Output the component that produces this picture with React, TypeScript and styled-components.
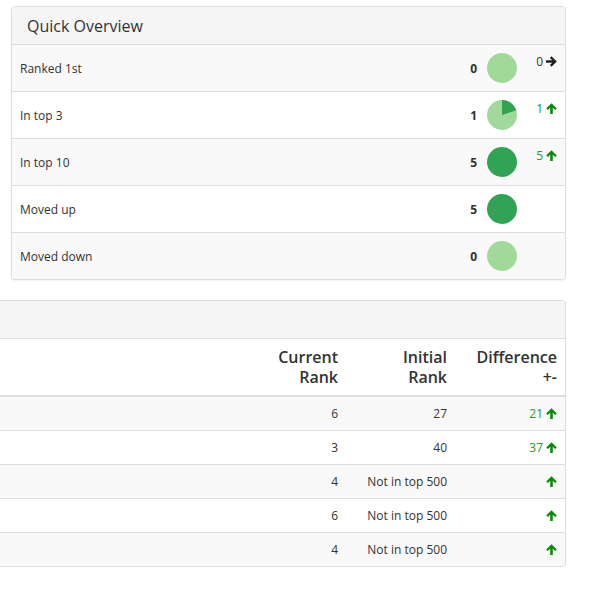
import React from "react";
import styled, { createGlobalStyle } from "styled-components";

const GlobalStyle = createGlobalStyle`
  html, body {
    margin: 0;
    padding: 0;
    background: #fff;
    overflow-x: hidden;
  }
  body {
    font-family: "Open Sans", "DejaVu Sans", sans-serif;
    font-size: 12px;
    line-height: 17px;
    color: #333;
  }
`;

const LIGHT = "#a1d99b";
const DARK = "#31a354";
const GAIN = "#2a9a2a";
const ARROW_GREEN = "#0a8a0a";

const Page = styled.div`
  width: 566px;
  padding-top: 6px;
  display: flex;
  flex-direction: column;
  gap: 20px;
`;

const Panel = styled.section<{ $bleed?: number }>`
  margin-left: ${(p) => (p.$bleed ? `-${p.$bleed}px` : "11px")};
  border: 1px solid #ddd;
  border-radius: 4px;
  background: #fff;
  box-shadow: 0 1px 1px rgba(0, 0, 0, 0.05);
  overflow: hidden;
`;

const PanelHeading = styled.header`
  height: 37px;
  padding: 0 15px;
  display: flex;
  align-items: center;
  background: #f5f5f5;
  border-bottom: 1px solid #ddd;
`;

const PanelTitle = styled.h3`
  margin: 0;
  font-size: 16px;
  font-weight: 500;
  color: #333;
  line-height: 18px;
`;

const StatRow = styled.div<{ $striped: boolean }>`
  display: grid;
  grid-template-columns: 1fr auto 30px 30px;
  column-gap: 10px;
  align-items: center;
  padding: 0 8px;
  height: 46px;
  background: ${(p) => (p.$striped ? "#f9f9f9" : "#fff")};
  & + & {
    border-top: 1px solid #ddd;
  }
`;

const StatLabel = styled.span`
  font-size: 12px;
`;

const StatValue = styled.strong`
  font-size: 12px;
  font-weight: 700;
  color: #333;
`;

const StatTrend = styled.span<{ $gain: boolean }>`
  align-self: start;
  padding-top: 8px;
  justify-self: end;
  display: flex;
  align-items: center;
  gap: 3px;
  white-space: nowrap;
  color: ${(p) => (p.$gain ? GAIN : "#333")};
`;

const PieSvg = styled.svg`
  display: block;
`;

const Table = styled.table`
  width: 100%;
  border-collapse: collapse;
  table-layout: fixed;
`;

const HeadCell = styled.th`
  padding: 8px;
  text-align: right;
  vertical-align: bottom;
  font-size: 16px;
  font-weight: 600;
  line-height: 20px;
  color: #333;
  border-bottom: 2px solid #ddd;
`;

const HeadLine = styled.span`
  display: block;
`;

const BodyRow = styled.tr<{ $striped: boolean }>`
  background: ${(p) => (p.$striped ? "#f9f9f9" : "#fff")};
`;

const Cell = styled.td`
  padding: 8px;
  text-align: right;
  font-size: 12px;
  line-height: 17px;
  height: 17px;
  color: #333;
  border-top: 1px solid #ddd;
`;

const Gain = styled.span`
  color: ${GAIN};
  margin-right: 3px;
`;

const ArrowSvg = styled.svg<{ $turn: boolean }>`
  display: inline-block;
  vertical-align: -1px;
  transform: ${(p) => (p.$turn ? "rotate(90deg)" : "none")};
`;

function Arrow({ dir }: { dir: "up" | "right" }) {
  const color = dir === "up" ? ARROW_GREEN : "#222";
  return (
    <ArrowSvg width="11" height="11" viewBox="0 0 11 11" $turn={dir === "right"}>
      <path
        d="M5.5 0.2 L10.8 5.5 L9.1 7.1 L6.8 4.8 V11 H4.2 V4.8 L1.9 7.1 L0.2 5.5 Z"
        fill={color}
      />
    </ArrowSvg>
  );
}

function Pie({ share }: { share: number }) {
  const r = 15;
  if (share <= 0 || share >= 1) {
    return (
      <PieSvg width="30" height="30" viewBox="0 0 30 30">
        <circle cx="15" cy="15" r={r} fill={share >= 1 ? DARK : LIGHT} />
      </PieSvg>
    );
  }
  const a = share * 2 * Math.PI;
  const x = 15 + r * Math.sin(a);
  const y = 15 - r * Math.cos(a);
  const large = share > 0.5 ? 1 : 0;
  return (
    <PieSvg width="30" height="30" viewBox="0 0 30 30">
      <circle cx="15" cy="15" r={r} fill={LIGHT} />
      <path d={`M15 15 L15 0 A${r} ${r} 0 ${large} 1 ${x} ${y} Z`} fill={DARK} />
    </PieSvg>
  );
}

type Stat = { label: string; value: number; share: number; trend?: number };

const stats: Stat[] = [
  { label: "Ranked 1st", value: 0, share: 0, trend: 0 },
  { label: "In top 3", value: 1, share: 0.2, trend: 1 },
  { label: "In top 10", value: 5, share: 1, trend: 5 },
  { label: "Moved up", value: 5, share: 1 },
  { label: "Moved down", value: 0, share: 0 },
];

type Ranking = { current: number; initial: number | null; diff: number | null };

const rankings: Ranking[] = [
  { current: 6, initial: 27, diff: 21 },
  { current: 3, initial: 40, diff: 37 },
  { current: 4, initial: null, diff: null },
  { current: 6, initial: null, diff: null },
  { current: 4, initial: null, diff: null },
];

export default function App() {
  return (
    <>
      <GlobalStyle />
      <Page>
        <Panel>
          <PanelHeading>
            <PanelTitle>Quick Overview</PanelTitle>
          </PanelHeading>
          {stats.map((s, i) => (
            <StatRow key={s.label} $striped={i % 2 === 0}>
              <StatLabel>{s.label}</StatLabel>
              <StatValue>{s.value}</StatValue>
              <Pie share={s.share} />
              {s.trend !== undefined ? (
                <StatTrend $gain={s.trend > 0}>
                  {s.trend}
                  <Arrow dir={s.trend > 0 ? "up" : "right"} />
                </StatTrend>
              ) : (
                <span />
              )}
            </StatRow>
          ))}
        </Panel>

        <Panel $bleed={30}>
          <PanelHeading />
          <Table>
            <colgroup>
              <col />
              <col style={{ width: 110 }} />
              <col style={{ width: 109 }} />
              <col style={{ width: 110 }} />
            </colgroup>
            <thead>
              <tr>
                <HeadCell />
                <HeadCell>
                  <HeadLine>Current</HeadLine>
                  <HeadLine>Rank</HeadLine>
                </HeadCell>
                <HeadCell>
                  <HeadLine>Initial</HeadLine>
                  <HeadLine>Rank</HeadLine>
                </HeadCell>
                <HeadCell>
                  <HeadLine>Difference</HeadLine>
                  <HeadLine>+-</HeadLine>
                </HeadCell>
              </tr>
            </thead>
            <tbody>
              {rankings.map((r, i) => (
                <BodyRow key={i} $striped={i % 2 === 0}>
                  <Cell />
                  <Cell>{r.current}</Cell>
                  <Cell>{r.initial ?? "Not in top 500"}</Cell>
                  <Cell>
                    {r.diff !== null && <Gain>{r.diff}</Gain>}
                    <Arrow dir="up" />
                  </Cell>
                </BodyRow>
              ))}
            </tbody>
          </Table>
        </Panel>
      </Page>
    </>
  );
}
